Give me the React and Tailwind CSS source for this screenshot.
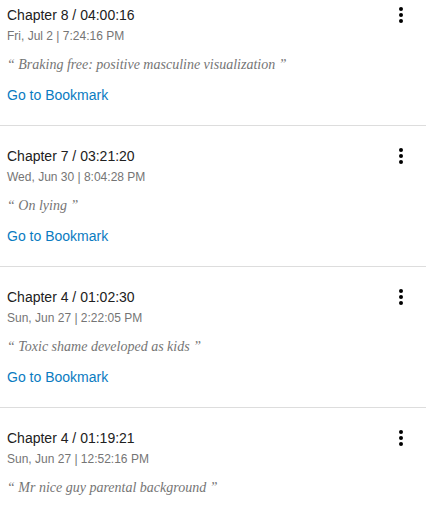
import React from 'react';

const bookmarks = [
  { chapter: 'Chapter 8 / 04:00:16', date: 'Fri, Jul 2 | 7:24:16 PM', note: 'Braking free: positive masculine visualization' },
  { chapter: 'Chapter 7 / 03:21:20', date: 'Wed, Jun 30 | 8:04:28 PM', note: 'On lying' },
  { chapter: 'Chapter 4 / 01:02:30', date: 'Sun, Jun 27 | 2:22:05 PM', note: 'Toxic shame developed as kids' },
  { chapter: 'Chapter 4 / 01:19:21', date: 'Sun, Jun 27 | 12:52:16 PM', note: 'Mr nice guy parental background' },
];

// Material "more vert" icon
const MoreVert = () => (
  <svg width="24" height="24" viewBox="0 0 24 24" className="fill-black">
    <circle cx="12" cy="6" r="2" />
    <circle cx="12" cy="12" r="2" />
    <circle cx="12" cy="18" r="2" />
  </svg>
);

const BookmarkItem = ({ item }) => (
  <div className="border-b border-[#dddddd] pl-[7px] pr-[13px] pt-5 pb-5">
    <div className="flex items-center justify-between">
      <div className="text-[14px] leading-5 text-[#212121]">{item.chapter}</div>
      <button className="-my-[2px]">
        <MoreVert />
      </button>
    </div>
    <div className="mt-[1px] text-[12px] leading-5 text-[#757575]">{item.date}</div>
    <p
      className="mt-[9px] text-[14px] leading-5 italic text-[#757575]"
      style={{ fontFamily: '"Liberation Serif", serif' }}
    >
      “ {item.note} ”
    </p>
    <a href="#" className="mt-[10px] block text-[14px] leading-5 text-[#0a7bc1]">
      Go to Bookmark
    </a>
  </div>
);

export default function App() {
  return (
    <div
      className="h-[511px] w-[426px] overflow-hidden bg-white"
      style={{ fontFamily: '"Liberation Sans", Arial, sans-serif' }}
    >
      <div className="-mt-[15px]">
        {bookmarks.map((b, i) => (
          <BookmarkItem key={i} item={b} />
        ))}
      </div>
    </div>
  );
}
